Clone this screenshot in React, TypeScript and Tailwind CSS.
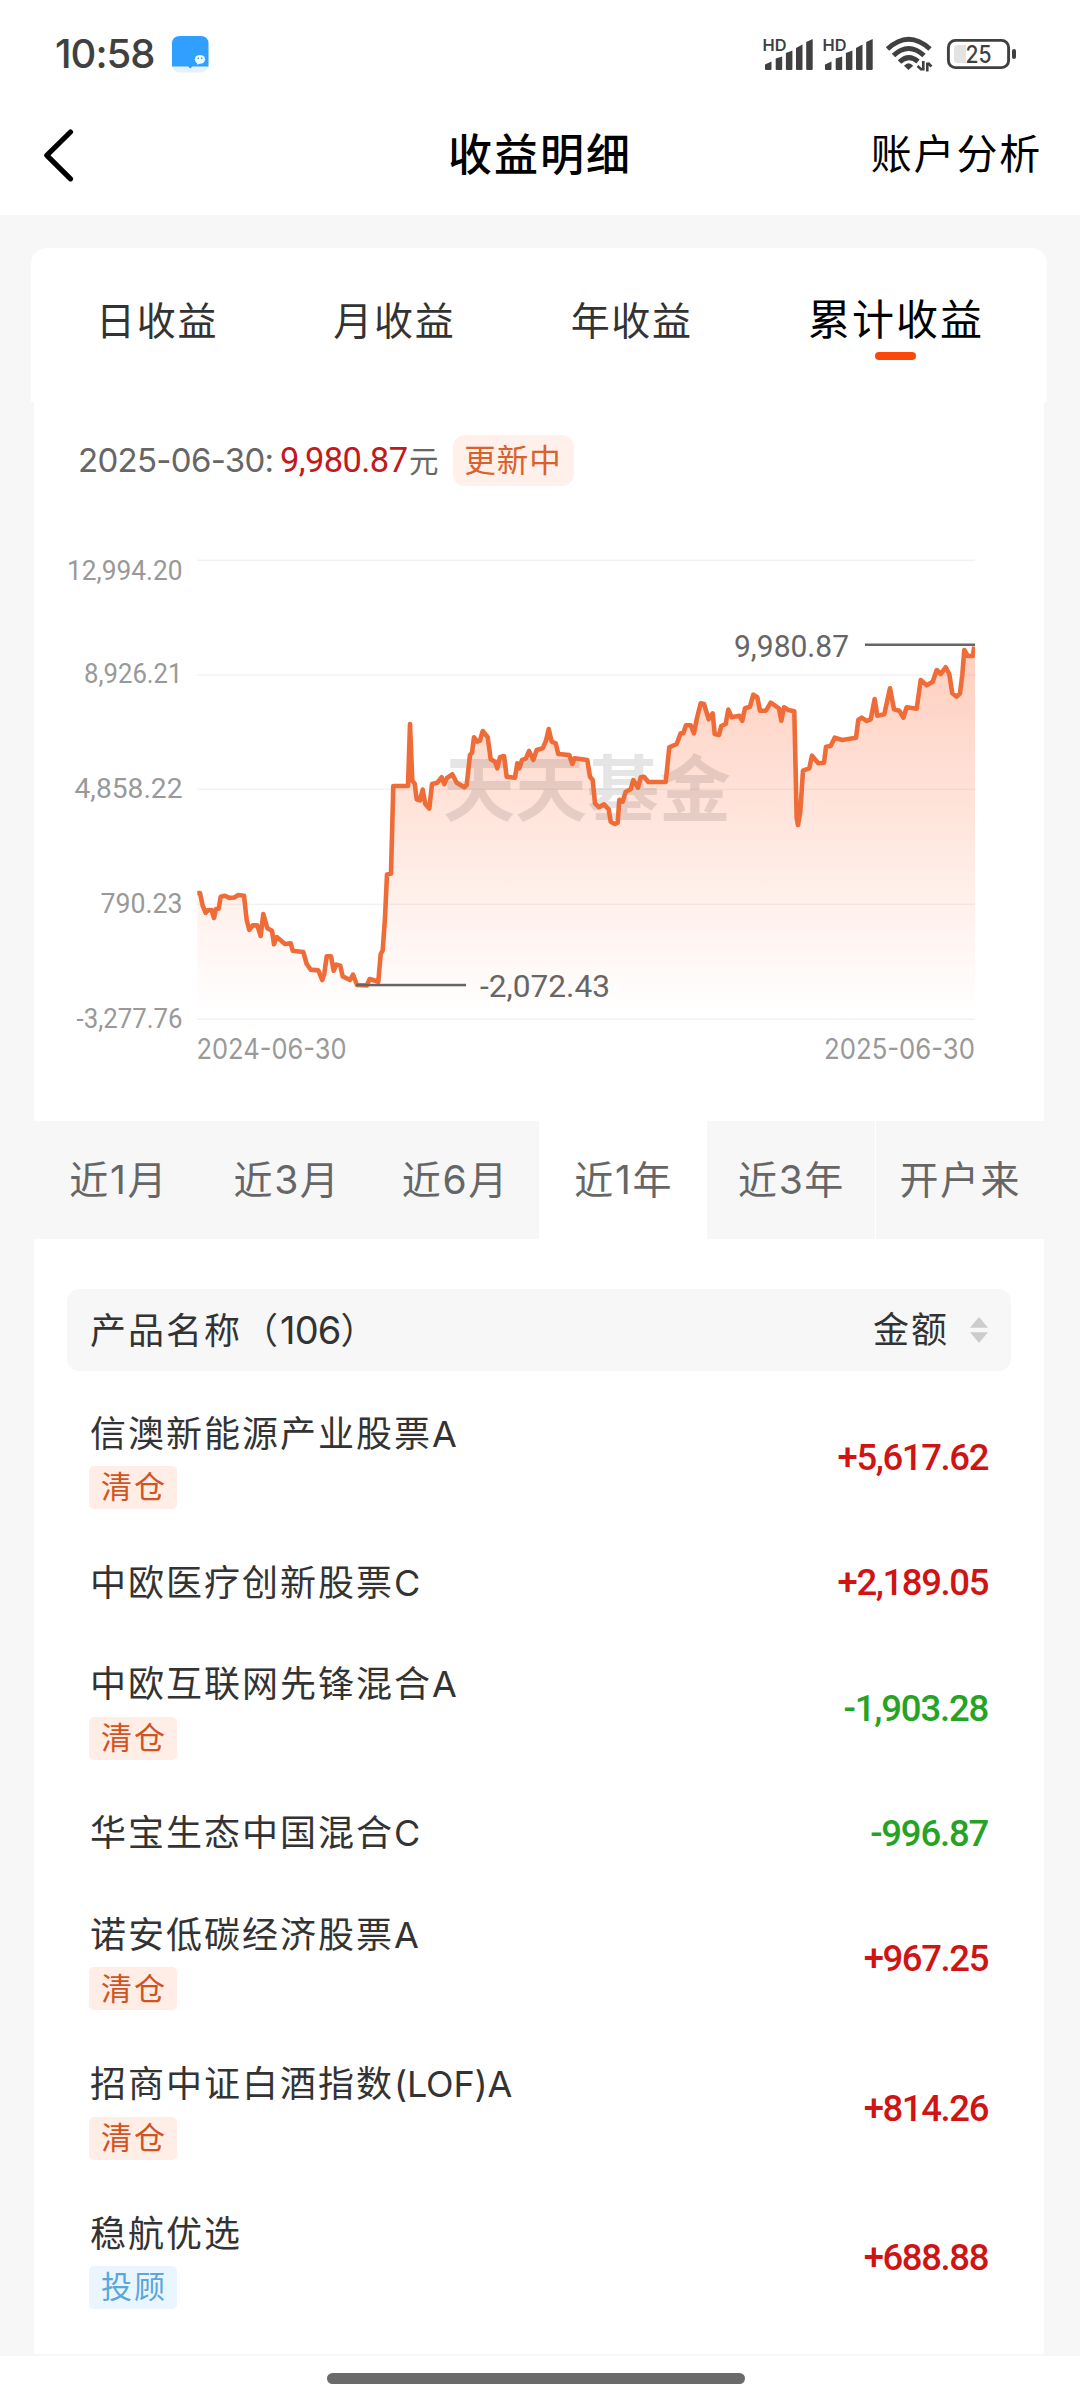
import React from 'react';

const UI = "font-['Inter','Noto_Sans_CJK_SC',sans-serif]";
const NUM = "font-['Roboto','Noto_Sans_CJK_SC',sans-serif]";

/* Cumulative profit curve, x,y pairs in page pixels */
const CURVE =
  '197.3,893 200,893 202.7,905.7 205.7,912.9 207.7,910.4 211.7,910 214,918 216,909 218.7,908.6 220.7,896.8 225,895.7 229.3,897.9 234.3,897.5 238.3,895 244,895.7 246.7,920 249.3,930 252.7,925.4 257.3,925.4 260.7,936 263.3,914 267.3,928.2 272,930.7 274,944.3 276.7,937 285,944 290.7,943.2 292.7,950.7 303.3,952 306.7,964 310.7,969.6 318.3,970.4 322.3,980 324.3,973.6 326.7,956.4 331,956.4 333.7,970.7 336.3,964.6 340.3,965.7 342.7,976.4 350,980 353,974.6 357,985 366.7,985.4 369.7,979 378.3,981.8 380.7,954 382.7,950.4 385,918 387,874.6 391,873.6 393.3,786 408,786 410,724 412.3,780.7 414.7,783.6 416.7,799.3 420,800.4 422.7,789.6 425.3,804 429.3,808.6 432,784 437.3,782.7 441.7,777.3 444.3,784 447,778 452.3,774.3 456.7,782.7 464.3,787.3 466.7,785 470,755 472,752.7 474,737.3 477.3,741.7 480,740.7 482.7,731 487.7,737.3 490.7,759.3 495,761.7 497.3,768.3 500,757.3 504,756 506.7,776.7 515,777.7 517.3,763.3 519.3,768.3 522,760 526,758.3 529,751 533.3,760 536.7,750 542.7,748.3 546,740.7 548.7,729 551.7,741.7 555.7,743.3 558.3,754 569.3,755 572.3,764 574.7,758.3 587.3,760 590,776.7 592.7,780 595,803.3 599,807.3 604,804.3 608.7,809.3 610.7,821.7 615,824 617.7,822.7 619.3,800 622.7,801.7 625.7,791.7 630.7,789.3 633.3,780 638,787.7 640.7,777.3 644,776.7 648.3,782 665.7,782 669.3,747.3 676.7,744 680.7,733.3 683.3,733.3 686,725.3 690.7,725.3 694,733.3 696.7,719.3 700.7,703.3 704,704 708.7,719.3 712.7,713.3 714.7,734 719,735 721.3,726 725.7,724 728.3,709.6 731.7,717.3 739.3,715.7 742.3,720.7 745,708.3 750,706.7 753.3,694.7 757.3,697.3 760,710.7 766,710.7 770.7,702.7 779,708.3 781.3,720.7 784,707.3 788.3,710 794.3,711.3 796.7,818.3 798,825 800.3,811.7 803,770.7 809.3,768.3 812,755.7 818.3,763.3 824,762.7 826,746.7 830.7,746 834.7,737.7 842.3,740 856,737.7 858.3,720 861.7,717.7 866.7,721 870.7,719.3 874.7,699 877.3,715.7 884.3,714.3 890,688.3 894,709.3 899.3,710.7 903.3,717.7 906.7,707.3 916.7,708.7 920.7,680 926.7,685.3 932.7,681.7 936.7,670 940.7,674 945.7,667.3 949.3,674 952.3,693.3 956.7,696.7 960,693.3 962.3,675 964.3,650 967.7,656 972.7,656 974.3,646.7';

const AXIS = [
  { label: '12,994.20', line: 560.4, base: 580, x: 67 },
  { label: '8,926.21', line: 675, base: 683, x: 84 },
  { label: '4,858.22', line: 789.4, base: 798, x: 74.5 },
  { label: '790.23', line: 904.4, base: 913, x: 100.5 },
  { label: '-3,277.76', line: 1019.3, base: 1028, x: 76.5 },
];

const RANGES = ['近1月', '近3月', '近6月', '近1年', '近3年', '开户来'];

const PRODUCTS = [
  { name: '信澳新能源产业股票', suffix: 'A', tag: '清仓', amount: '+5,617.62' },
  { name: '中欧医疗创新股票', suffix: 'C', amount: '+2,189.05' },
  { name: '中欧互联网先锋混合', suffix: 'A', tag: '清仓', amount: '-1,903.28' },
  { name: '华宝生态中国混合', suffix: 'C', amount: '-996.87' },
  { name: '诺安低碳经济股票', suffix: 'A', tag: '清仓', amount: '+967.25' },
  { name: '招商中证白酒指数', suffix: '(LOF)A', tag: '清仓', amount: '+814.26' },
  { name: '稳航优选', suffix: '', tag: '投顾', amount: '+688.88' },
];

function Signal() {
  return (
    <svg width="52" height="36" viewBox="0 0 52 36" fill="#404040">
      <text x="-0.5" y="14.5" fontSize="16" fontWeight="600" fontFamily="Inter" textLength="24" lengthAdjust="spacingAndGlyphs">HD</text>
      <path d="M2 33 V28.5 L8.5 25.5 V33 Q8.5 34 7.5 34 H3 Q2 34 2 33Z" />
      <path d="M12.7 33 V22.5 L19.2 20.5 V33 Q19.2 34 18.2 34 H13.7 Q12.7 34 12.7 33Z" />
      <path d="M22.9 33 V17 L29.4 14.5 V33 Q29.4 34 28.4 34 H23.9 Q22.9 34 22.9 33Z" />
      <path d="M33 33 V12 L39.5 8.5 V33 Q39.5 34 38.5 34 H34 Q33 34 33 33Z" />
      <path d="M43.2 33 V6 L49.7 3 V33 Q49.7 34 48.7 34 H44.2 Q43.2 34 43.2 33Z" />
    </svg>
  );
}

function StatusBar() {
  return (
    <div className="flex h-[108px] items-center pl-[55px] pr-[63px]">
      <span className={`${UI} w-[104px] text-[40px] leading-[40px] font-[450] tracking-[-1px] text-[#404040]`}>10:58</span>
      <svg className="ml-[13px]" width="37" height="37" viewBox="0 0 37 37">
        <rect width="36.5" height="36.5" rx="8" fill="#e6f1fb" />
        <path d="M8 0 H28.5 Q36.5 0 36.5 8 V30.5 H20.5 L18.3 32.5 L16 30.5 H0 V8 Q0 0 8 0Z" fill="#309fff" />
        <ellipse cx="28" cy="23.3" rx="5.2" ry="4.4" fill="#e9faff" />
        <path d="M25 26 L25 28.8 L28 27.4Z" fill="#e9faff" />
        <circle cx="26.3" cy="22.3" r="0.8" fill="#3a7fbf" />
        <circle cx="29.7" cy="22.3" r="0.8" fill="#3a7fbf" />
      </svg>
      <div className="ml-auto flex items-center">
        <Signal />
        <div className="ml-2">
          <Signal />
        </div>
        <svg className="ml-[10px]" width="48" height="38" viewBox="885 36 48 38" fill="none" stroke="#404040" strokeWidth="5">
          <path d="M887.5 50 Q908.5 30.5 930 50" />
          <path d="M893.5 56.5 Q908.5 42.5 924 56.5" />
          <path d="M899.5 63 Q908.5 54.5 918 62.5" />
          <path d="M908.5 71 L904 66.8 Q908.5 61.5 913.2 66.8Z" fill="#404040" stroke="none" />
          <path d="M923.3 62 V71.5 M917.5 67 L922 71 M927.3 72.5 V63.5 M931.5 67.5 L928 64" strokeWidth="2.6" />
        </svg>
        <svg className="ml-[13px]" width="71" height="36" viewBox="946 36 71 36">
          <rect x="948.4" y="40.4" width="60.2" height="27.2" rx="7" fill="none" stroke="#404040" strokeWidth="2.9" />
          <path d="M958 45 H966 V63 H958 Q954 63 954 59 V49 Q954 45 958 45Z" fill="#e3e3e3" />
          <rect x="1012" y="49" width="4" height="10" rx="2" fill="#404040" />
          <text x="965.5" y="63" fontSize="24" fontWeight="500" fontFamily="Inter" fill="#404040" textLength="26" lengthAdjust="spacingAndGlyphs">25</text>
        </svg>
      </div>
    </div>
  );
}

function NavBar() {
  return (
    <div className={`${UI} flex h-[107px] items-center justify-between pr-[38px] pl-[43px] pb-[14px] text-black`}>
      <svg width="190" height="54" viewBox="43 127 190 54">
        <path d="M70.5 131 L46.8 154.3 L70.5 177.8" fill="none" stroke="#000" strokeWidth="5.2" strokeLinecap="round" strokeLinejoin="round" />
      </svg>
      <h1 className="ml-[-24px] text-[44px] font-medium tracking-[2px]">收益明细</h1>
      <span className="text-[41px] tracking-[1.8px]">账户分析</span>
    </div>
  );
}

function ProfitTabs() {
  return (
    <div className={`${UI} mr-[33px] ml-[31px] flex h-[154px] items-start justify-between rounded-t-[16px] bg-white pt-[40px] pr-[63px] pl-[65px] text-[39px] tracking-[1.7px] text-[#333]`}>
      <span className="leading-[65px]">日收益</span>
      <span className="leading-[65px]">月收益</span>
      <span className="leading-[65px]">年收益</span>
      <div className="flex flex-col items-center">
        <span className="text-[42px] leading-[64px] tracking-[2px] text-black">累计收益</span>
        <span className="h-2 w-[41px] rounded-full bg-[#fb4707]" />
      </div>
    </div>
  );
}

function Chart() {
  return (
    <svg width="1010" height="601" viewBox="34 520 1010 601" fontFamily="Roboto">
      <defs>
        <linearGradient id="fill" gradientUnits="userSpaceOnUse" x1="0" y1="640" x2="0" y2="1012">
          <stop offset="0" stopColor="#ff5a23" stopOpacity="0.3" />
          <stop offset="1" stopColor="#ff5a23" stopOpacity="0" />
        </linearGradient>
        <clipPath id="plot">
          <rect x="197" y="550" width="778" height="480" />
        </clipPath>
      </defs>
      {AXIS.map((a) => (
        <g key={a.label}>
          <rect x="197" y={a.line - 0.8} width="778" height="1.5" fill="#f2f2f2" />
          <text x={a.x} y={a.base} fontSize="28.5" fill="#999" textLength={182.5 - a.x} lengthAdjust="spacingAndGlyphs">{a.label}</text>
        </g>
      ))}
      <polygon points={`197.3,1019 ${CURVE} 975,646 975,1019`} fill="url(#fill)" />
      <text x="443" y="815" fontSize="72" fontWeight="700" fontFamily="Noto Sans CJK SC" fill="#000" fillOpacity="0.1" textLength="288">天天基金</text>
      <polyline points={CURVE} fill="none" stroke="#ef6c39" strokeWidth="4.6" strokeLinejoin="round" clipPath="url(#plot)" />
      <rect x="865" y="643.5" width="110" height="2.5" fill="#666" />
      <rect x="356" y="983.8" width="110" height="2.5" fill="#666" />
      <text x="734" y="656.5" fontSize="31.5" fill="#666" textLength="115" lengthAdjust="spacingAndGlyphs">9,980.87</text>
      <text x="480" y="996.5" fontSize="31.5" fill="#666" textLength="130" lengthAdjust="spacingAndGlyphs">-2,072.43</text>
      <g fontFamily="Inter" fontSize="28" fill="#999">
        <text x="196.5" y="1058.5" textLength="150" lengthAdjust="spacingAndGlyphs">2024-06-30</text>
        <text x="824" y="1058.5" textLength="151" lengthAdjust="spacingAndGlyphs">2025-06-30</text>
      </g>
    </svg>
  );
}

function ProfitCard() {
  return (
    <div className="mr-[36px] ml-[34px] h-[719px] bg-white pt-[33px]">
      <div className="mb-[34px] flex h-[51px] items-center pl-[44px]">
        <span className={`${UI} w-[202px] pt-px text-[33px] tracking-[-0.7px] text-[#666]`}>2025-06-30:</span>
        <span className={`${NUM} w-[129px] pt-px text-[34.5px] tracking-[-0.6px] text-[#c4181b]`}>9,980.87</span>
        <span className={`${UI} pt-px text-[29.5px] text-[#666]`}>元</span>
        <span className={`${UI} ml-[14px] flex h-[51px] w-[121px] items-center justify-center rounded-[12px] bg-[#fff0eb] text-[31.5px] tracking-[1px] text-[#d9622c]`}>更新中</span>
      </div>
      <Chart />
    </div>
  );
}

function RangeTabs() {
  return (
    <div className={`${UI} mr-[36px] ml-[34px] grid h-[118px] grid-cols-6 bg-[#f7f7f7] text-[39px] tracking-[1.6px] text-[#666]`}>
      {RANGES.map((r, i) => (
        <div
          key={r}
          className={
            i === 3
              ? 'flex items-center justify-center bg-white pl-px'
              : i === 4
                ? 'flex items-center justify-center border-r border-white pl-px'
                : 'flex items-center justify-center pl-px'
          }
        >
          {r}
        </div>
      ))}
    </div>
  );
}

function ProductList() {
  return (
    <div className="mr-[36px] ml-[34px] h-[1115px] bg-white px-[33px] pt-[50px]">
      <div className={`${UI} flex h-[82px] items-center rounded-[12px] bg-[#f7f7f7] pr-[23px] pl-[23px] text-[36px] tracking-[2px] text-[#333]`}>
        <span>
          产品名称（<span className="text-[38px] tracking-[-0.8px]">106</span>）
        </span>
        <span className="ml-auto">金额</span>
        <svg className="ml-[21px]" width="18" height="26" viewBox="0 0 18 26" fill="#ccc">
          <path d="M9 0 L18 10.7 H0Z" />
          <path d="M9 26 L0 15.3 H18Z" />
        </svg>
      </div>
      <div className="flex flex-col pt-[11.5px] pr-[23px] pl-[22px]">
        {PRODUCTS.map((p) => (
          <div key={p.name} className={p.tag ? 'flex h-[149.4px] items-center justify-between' : 'flex h-[101.3px] items-center justify-between'}>
            <div className={p.tag ? 'flex h-full flex-col items-start pt-[26px]' : 'flex flex-col items-start'}>
              <span className={`${UI} pl-px text-[36px] leading-[50px] tracking-[2px] text-[#333]`}>
                {p.name}
                <span className="tracking-[-0.2px]">{p.suffix}</span>
              </span>
              {p.tag && (
                <span
                  className={
                    p.tag === '投顾'
                      ? `${UI} mt-[7.5px] flex h-[43px] w-[88px] items-center justify-center rounded-[5px] bg-[#eaf6ff] pl-[2px] text-[31px] tracking-[2px] text-[#5ba7dc]`
                      : `${UI} mt-[7.5px] flex h-[43px] w-[88px] items-center justify-center rounded-[5px] bg-[#ffede6] pl-[2px] text-[31px] tracking-[2px] text-[#d1531f]`
                  }
                >
                  {p.tag}
                </span>
              )}
            </div>
            <span className={p.amount[0] === '+' ? `${NUM} pt-[2px] text-[36.5px] font-medium tracking-[-1.4px] text-[#d01414]` : `${NUM} pt-[2px] text-[36.5px] font-medium tracking-[-1.2px] text-[#25a325]`}>
              {p.amount}
            </span>
          </div>
        ))}
      </div>
    </div>
  );
}

export default function App() {
  return (
    <div className="flex h-[2400px] w-[1080px] flex-col overflow-hidden bg-[#f7f7f7]">
      <header className="h-[215px] shrink-0 bg-white">
        <StatusBar />
        <NavBar />
      </header>
      <main className="h-[2141px] shrink-0 pt-[33px]">
        <ProfitTabs />
        <ProfitCard />
        <RangeTabs />
        <ProductList />
      </main>
      <footer className="flex h-[44px] shrink-0 items-start bg-white pt-[17px] pl-[327px]">
        <span className="h-[10.5px] w-[418px] rounded-full bg-[#6a6a6a]" />
      </footer>
    </div>
  );
}
